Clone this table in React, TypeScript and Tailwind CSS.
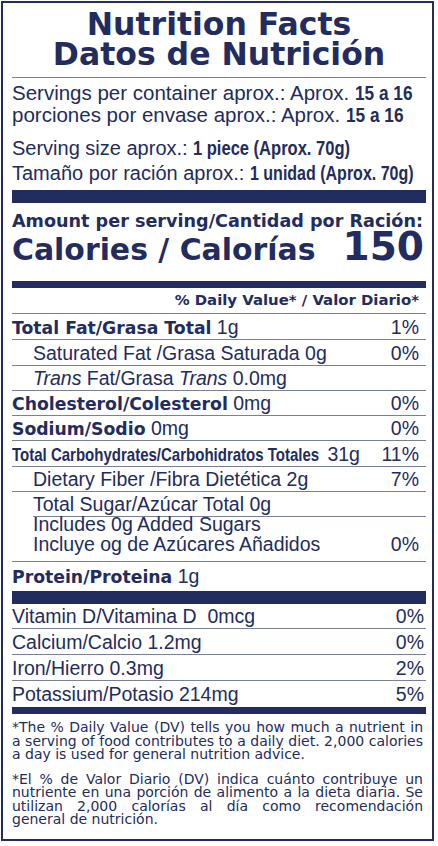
import type { ReactNode } from 'react'

const heavy = "font-['DejaVu_Sans',sans-serif] font-bold"

function B({ children }: { children: ReactNode }) {
  return <span className={`${heavy} text-[17.25px]`}>{children}</span>
}

// condensed bold: Liberation Sans bold squeezed into the width the label takes
function Cond({ w, s, children }: { w: string; s: string; children: ReactNode }) {
  return (
    <span className={`inline-block whitespace-nowrap font-bold ${w}`}>
      <span className={`inline-block origin-left ${s}`}>{children}</span>
    </span>
  )
}

type Nutrient = {
  cls: string
  label: ReactNode
  dv?: string
}

const nutrients: Nutrient[] = [
  { cls: 'h-[26px]', label: <><B>Total Fat/Grasa Total</B> 1g</>, dv: '1%' },
  { cls: 'h-[26px] pl-[21px]', label: 'Saturated Fat /Grasa Saturada 0g', dv: '0%' },
  { cls: 'h-[25px] pl-[21px]', label: <><i>Trans</i> Fat/Grasa <i>Trans</i> 0.0mg</> },
  { cls: 'h-[25px]', label: <><B>Cholesterol/Colesterol</B> 0mg</>, dv: '0%' },
  { cls: 'h-[25px]', label: <><B>Sodium/Sodio</B> 0mg</>, dv: '0%' },
  {
    cls: 'h-[26px]',
    label: (
      <>
        <span className="text-[19px]">
          <Cond w="w-[310px]" s="scale-x-[0.79]">Total Carbohydrates/Carbohidratos Totales</Cond>
        </span>{' '}
        31g
      </>
    ),
    dv: '11%',
  },
  { cls: 'h-[25px] pl-[21px]', label: 'Dietary Fiber /Fibra Dietética 2g', dv: '7%' },
  { cls: 'h-[25px] ml-[21px]', label: 'Total Sugar/Azúcar Total 0g' },
]

const minerals = [
  { cls: 'h-[25px]', label: 'Vitamin D/Vitamina D\u00a0 0mcg', dv: '0%' },
  { cls: 'h-[26px]', label: 'Calcium/Calcio 1.2mg', dv: '0%' },
  { cls: 'h-[26px]', label: 'Iron/Hierro 0.3mg', dv: '2%' },
  { cls: 'h-[26px] border-b-0', label: 'Potassium/Potasio 214mg', dv: '5%' },
]

export default function App() {
  return (
    <div className="h-[846px] w-[438px] bg-white pl-px pt-px font-['Liberation_Sans',Arial,sans-serif] text-[#232c5e]">
      <div className="flex h-[840px] w-[433px] flex-col border-2 border-[#232c5e] pl-[9px] pr-[6px]">
        <header className={`pt-[6px] text-center text-[31.5px] leading-[30px] ${heavy}`}>
          <h1>Nutrition Facts</h1>
          <h1>Datos de Nutrición</h1>
        </header>
        <div className="mt-[8px] h-px bg-[#7a7f9c]" />

        <div className="mt-[4px] text-[20.5px] leading-[22px]">
          <p>
            Servings per container aprox.: Aprox. <Cond w="w-[56px]" s="scale-x-[0.84]">15 a 16</Cond>
          </p>
          <p>
            porciones por envase aprox.: Aprox. <Cond w="w-[56px]" s="scale-x-[0.84]">15 a 16</Cond>
          </p>
        </div>
        <div className="mt-[10px] text-[20px] leading-[25px]">
          <p>
            Serving size aprox.: <Cond w="w-[157px]" s="scale-x-[0.826]">1 piece (Aprox. 70g)</Cond>
          </p>
          <p>
            Tamaño por ración aprox.: <Cond w="w-[164px]" s="scale-x-[0.8]">1 unidad (Aprox. 70g)</Cond>
          </p>
        </div>
        <div className="mt-[4px] h-[13px] bg-[#232c5e]" />

        <p className={`mt-[7px] text-[17.6px] leading-[22px] ${heavy}`}>Amount per serving/Cantidad por Ración:</p>
        <div className={`mt-[-2px] flex items-baseline justify-between pr-[2px] leading-[34px] ${heavy}`}>
          <span className="text-[29.9px]">Calories / Calorías</span>
          <span className="text-[39px]">150</span>
        </div>
        <div className="mt-[14px] h-[7px] bg-[#232c5e]" />

        <p className={`h-[26px] border-b border-[#7a7f9c] pr-[7px] text-right text-[14.9px] leading-[24px] ${heavy}`}>
          % Daily Value* / Valor Diario*
        </p>

        <div className="text-[19.5px] leading-none">
          {nutrients.map((n, i) => (
            <div key={i} className={`flex items-center justify-between border-b border-[#7a7f9c] pt-[2px] ${n.cls}`}>
              <span>{n.label}</span>
              {n.dv && <span className="pr-[7px]">{n.dv}</span>}
            </div>
          ))}
          <div className="flex h-[45px] items-end justify-between border-b border-[#7a7f9c] pb-[7px] pl-[21px] leading-[20px]">
            <span>
              Includes 0g Added Sugars
              <br />
              Incluye og de Azúcares Añadidos
            </span>
            <span className="pr-[7px]">0%</span>
          </div>
          <div className="flex h-[29px] items-center">
            <span>
              <B>Protein/Proteina</B> 1g
            </span>
          </div>
        </div>
        <div className="h-[13px] bg-[#232c5e]" />

        <div className="text-[19.5px] leading-none">
          {minerals.map((m, i) => (
            <div key={i} className={`flex items-center justify-between border-b border-[#7a7f9c] pt-[2px] ${m.cls}`}>
              <span>{m.label}</span>
              <span className="pr-[2px]">{m.dv}</span>
            </div>
          ))}
        </div>
        <div className="h-[7px] bg-[#232c5e]" />

        <div className="mt-[7px] pr-[3px] font-['DejaVu_Sans',sans-serif] text-[14px] leading-[13.5px]">
          <p className="text-justify [text-align-last:justify]">*The % Daily Value (DV) tells you how much a nutrient in</p>
          <p className="text-justify [text-align-last:justify]">a serving of food contributes to a daily diet. 2,000 calories</p>
          <p>a day is used for general nutrition advice.</p>
          <p className="mt-[11px] text-justify [text-align-last:justify]">*El % de Valor Diario (DV) indica cuánto contribuye un</p>
          <p className="text-justify [text-align-last:justify]">nutriente en una porción de alimento a la dieta diaria. Se</p>
          <p className="text-justify [text-align-last:justify]">utilizan 2,000 calorías al día como recomendación</p>
          <p>general de nutrición.</p>
        </div>
      </div>
    </div>
  )
}
